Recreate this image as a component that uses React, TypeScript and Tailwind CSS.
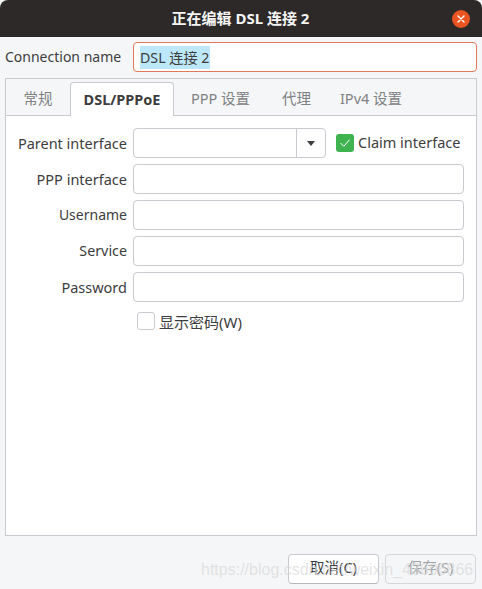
import React from "react";

function Field() {
  return <div className="h-[30px] w-[331px] rounded-[4px] border border-[#c9c9cf] bg-white" />;
}

function Row({ label, size, children }: { label: string; size: string; children: React.ReactNode }) {
  return (
    <div className="flex h-[30px] items-center">
      <div className={`-mt-[1px] h-[30px] w-[121px] whitespace-nowrap text-right leading-[30px] text-[#3d3d3d] ${size}`}>{label}</div>
      <div className="ml-[6px] flex items-center">{children}</div>
    </div>
  );
}

function Tab({ label, width }: { label: string; width: string }) {
  return (
    <div className={`flex h-[33px] items-center justify-center text-[14.5px] text-[#7f8283] ${width}`}>{label}</div>
  );
}

export default function App() {
  return (
    <div className="relative flex h-[589px] w-[482px] flex-col overflow-hidden bg-[#f5f6f7] font-['Noto_Sans','Noto_Sans_CJK_SC',sans-serif] text-[14px] text-[#3d3d3d]">
      <div className="relative flex h-[37px] shrink-0 items-center justify-center rounded-t-[8px] bg-[#2c2928] text-[15px] font-bold text-[#f5f5f5]">
        <span className="-ml-[1px]">正在编辑 DSL 连接 2</span>
        <div className="absolute left-[452px] top-[10px] flex h-[18px] w-[18px] items-center justify-center rounded-full bg-[#e95420]">
          <svg width="10" height="10" viewBox="0 0 10 10" fill="none" stroke="#ffffff" strokeWidth="1.4" strokeLinecap="round">
            <path d="M2 2 L8 8 M8 2 L2 8" />
          </svg>
        </div>
      </div>

      <div className="mt-[5px] flex h-[30px] shrink-0 items-center px-[5px]">
        <div className="-mt-[1px] w-[123px] whitespace-nowrap text-[14px]">Connection name</div>
        <div className="ml-[5px] flex h-[30px] w-[344px] items-center rounded-[4px] border border-[#e0795b] bg-white pl-[6px]">
          <span className="bg-[#bde8fb] pr-[1px] text-[14.2px] leading-[23px] text-[#3d3d3d]">DSL 连接 2</span>
        </div>
      </div>

      <div className="mx-[5px] mt-[6px] flex h-[458px] w-[472px] shrink-0 flex-col border border-[#c9c9cf]">
        <div className="flex h-[37px] shrink-0 items-end border-b border-[#c9c9cf] bg-[#f5f6f7]">
          <Tab label="常规" width="w-[64px]" />
          <div className="relative -mb-[1px] flex h-[34px] w-[104px] items-center justify-center rounded-t-[4px] border border-b-0 border-[#c9c9cf] bg-white text-[14.5px] font-bold text-[#3d3d3d]">
            DSL/PPPoE
          </div>
          <Tab label="PPP 设置" width="w-[93px]" />
          <Tab label="代理" width="w-[59px]" />
          <Tab label="IPv4 设置" width="w-[90px]" />
        </div>
        <div className="flex-1 bg-white pt-[12px]">
          <div className="flex flex-col gap-[6px]">
            <Row label="Parent interface" size="text-[14.5px]">
              <div className="flex h-[30px] w-[193px] rounded-[4px] border border-[#c9c9cf] bg-white">
                <div className="flex-1 border-r border-[#c9c9cf]" />
                <div className="flex w-[28px] items-center justify-center">
                  <div className="h-0 w-0 border-x-[4.5px] border-t-[5px] border-x-transparent border-t-[#3d3d3d]" />
                </div>
              </div>
              <div className="ml-[10px] flex h-[18px] w-[18px] items-center justify-center rounded-[3px] bg-[#3eb34f]">
                <svg width="14" height="14" viewBox="0 0 14 14" fill="none" stroke="#ffffff" strokeWidth="1">
                  <path d="M2.5 7 L5.8 10.3 L11.5 3.8" />
                </svg>
              </div>
              <span className="-mt-[1px] ml-[4px] whitespace-nowrap text-[14.5px]">Claim interface</span>
            </Row>
            <Row label="PPP interface" size="text-[14.5px]"><Field /></Row>
            <Row label="Username" size="text-[14px]"><Field /></Row>
            <Row label="Service" size="text-[14.3px]"><Field /></Row>
            <Row label="Password" size="text-[14.5px]"><Field /></Row>
          </div>
          <div className="ml-[131px] mt-[10px] flex h-[18px] items-center">
            <div className="h-[18px] w-[18px] rounded-[3px] border border-[#c9c9cf] bg-white" />
            <span className="ml-[4px] mt-[2px] text-[15px]">显示密码(W)</span>
          </div>
        </div>
      </div>

      <div className="mt-[18px] flex h-[30px] shrink-0 justify-end gap-[6px] pr-[6px]">
        <div className="flex w-[91px] items-center justify-center rounded-[4px] border border-[#c9c9cf] border-b-[#b8b8be] bg-white pb-[2px] text-[14.5px]">取消(C)</div>
        <div className="flex w-[91px] items-center justify-center rounded-[4px] border border-[#d5d6da] bg-[#f5f6f7] pb-[2px] text-[14.5px] text-[#a0a4a6]">保存(S)</div>
      </div>

      <div className="absolute left-[201px] top-[558px] whitespace-nowrap font-['Liberation_Sans',sans-serif] text-[16px] leading-[24px] text-[#d8d8da]/70">
        https://blog.csdn.net/weixin_43606866
      </div>
    </div>
  );
}
